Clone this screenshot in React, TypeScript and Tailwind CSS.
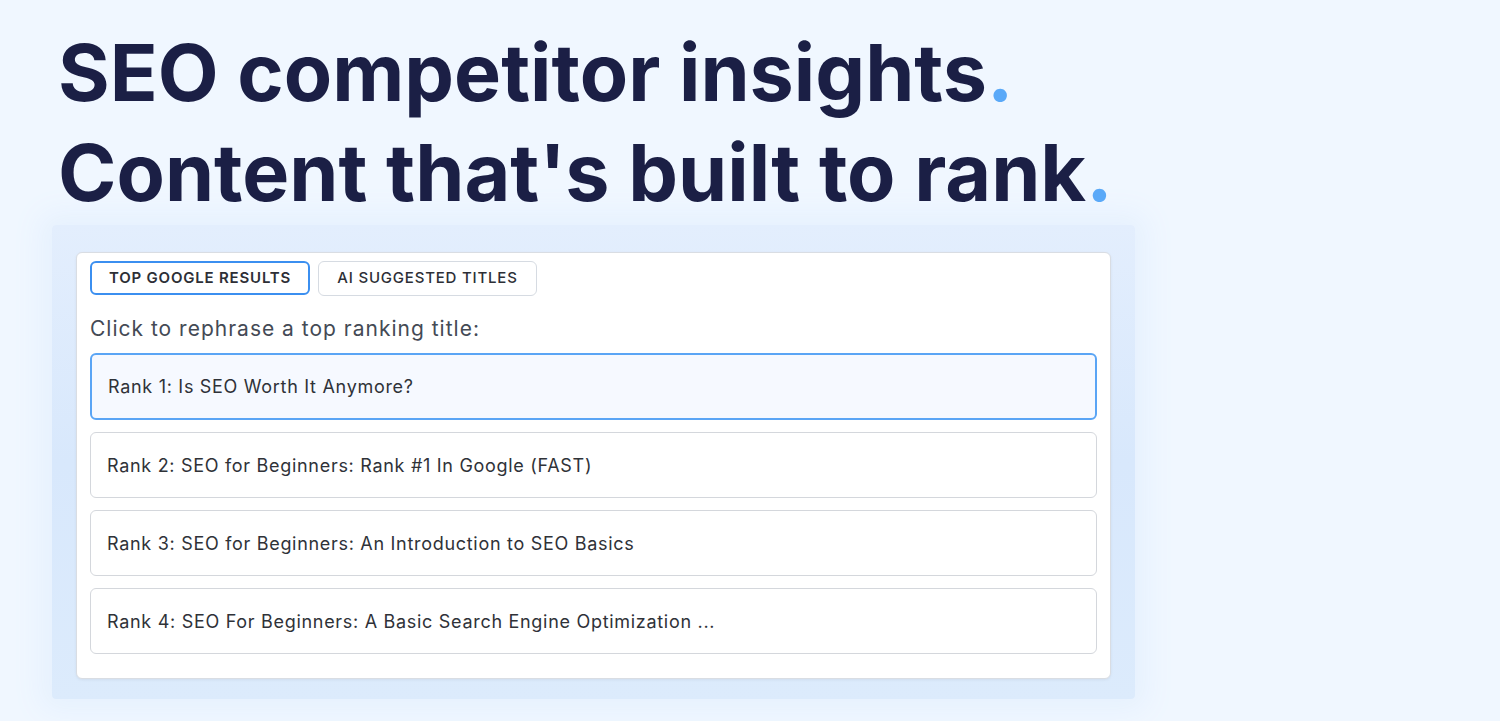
import React from "react";

const ranks = [
  "Rank 1: Is SEO Worth It Anymore?",
  "Rank 2: SEO for Beginners: Rank #1 In Google (FAST)",
  "Rank 3: SEO for Beginners: An Introduction to SEO Basics",
  "Rank 4: SEO For Beginners: A Basic Search Engine Optimization ...",
];

export default function App() {
  return (
    <div
      className="min-h-[721px] w-full bg-[#f0f7ff] text-[#1a1f44]"
      style={{ fontFamily: "Inter, 'Noto Sans', sans-serif" }}
    >
      <div className="pl-[58px] pt-[22px]">
        <h1 className="text-[79px] font-bold leading-[100px] text-[#1b1f45]">
          SEO competitor insights<span className="text-[#5aa9f8]">.</span>
          <br />
          Content that's built to rank<span className="text-[#5aa9f8]">.</span>
        </h1>
      </div>

      <div className="ml-[52px] mt-[3px] w-[1083px] rounded-sm bg-gradient-to-b from-[#e3eefd] via-[#d8e8fc] to-[#dcebfc] px-6 pb-[20px] pt-[27px] shadow-[0_0_28px_12px_#e6f1fe]">
        <div className="rounded-md border border-[#d9dde3] bg-white px-[13px] pb-6 pt-2 shadow-[0_1px_3px_rgba(0,0,0,0.06)]">
          <div className="flex gap-2">
            <button className="h-[34px] w-[220px] rounded-md border-2 border-[#3b8ff0] text-[15px] font-semibold tracking-[0.8px] text-[#2d2f36]">
              TOP GOOGLE RESULTS
            </button>
            <button className="h-[35px] w-[219px] rounded-md border border-[#d6dbe2] text-[15px] font-medium tracking-[0.8px] text-[#2d2f36]">
              AI SUGGESTED TITLES
            </button>
          </div>
          <p className="mt-[21px] text-[21px] leading-6 tracking-[1px] text-[#444a55]">
            Click to rephrase a top ranking title:
          </p>
          <div className="mt-[12px] flex flex-col gap-3">
            {ranks.map((r, i) => (
              <div
                key={i}
                className={
                  i === 0
                    ? "flex h-[67px] items-center rounded-md border-2 border-[#5aa5f5] bg-[#f6f9ff] px-4 text-[18px] tracking-[0.7px] text-[#2f3238]"
                    : "flex h-[66px] items-center rounded-md border border-[#d4d7dc] bg-white px-4 text-[18px] tracking-[0.7px] text-[#2f3238]"
                }
              >
                {r}
              </div>
            ))}
          </div>
        </div>
      </div>
    </div>
  );
}
